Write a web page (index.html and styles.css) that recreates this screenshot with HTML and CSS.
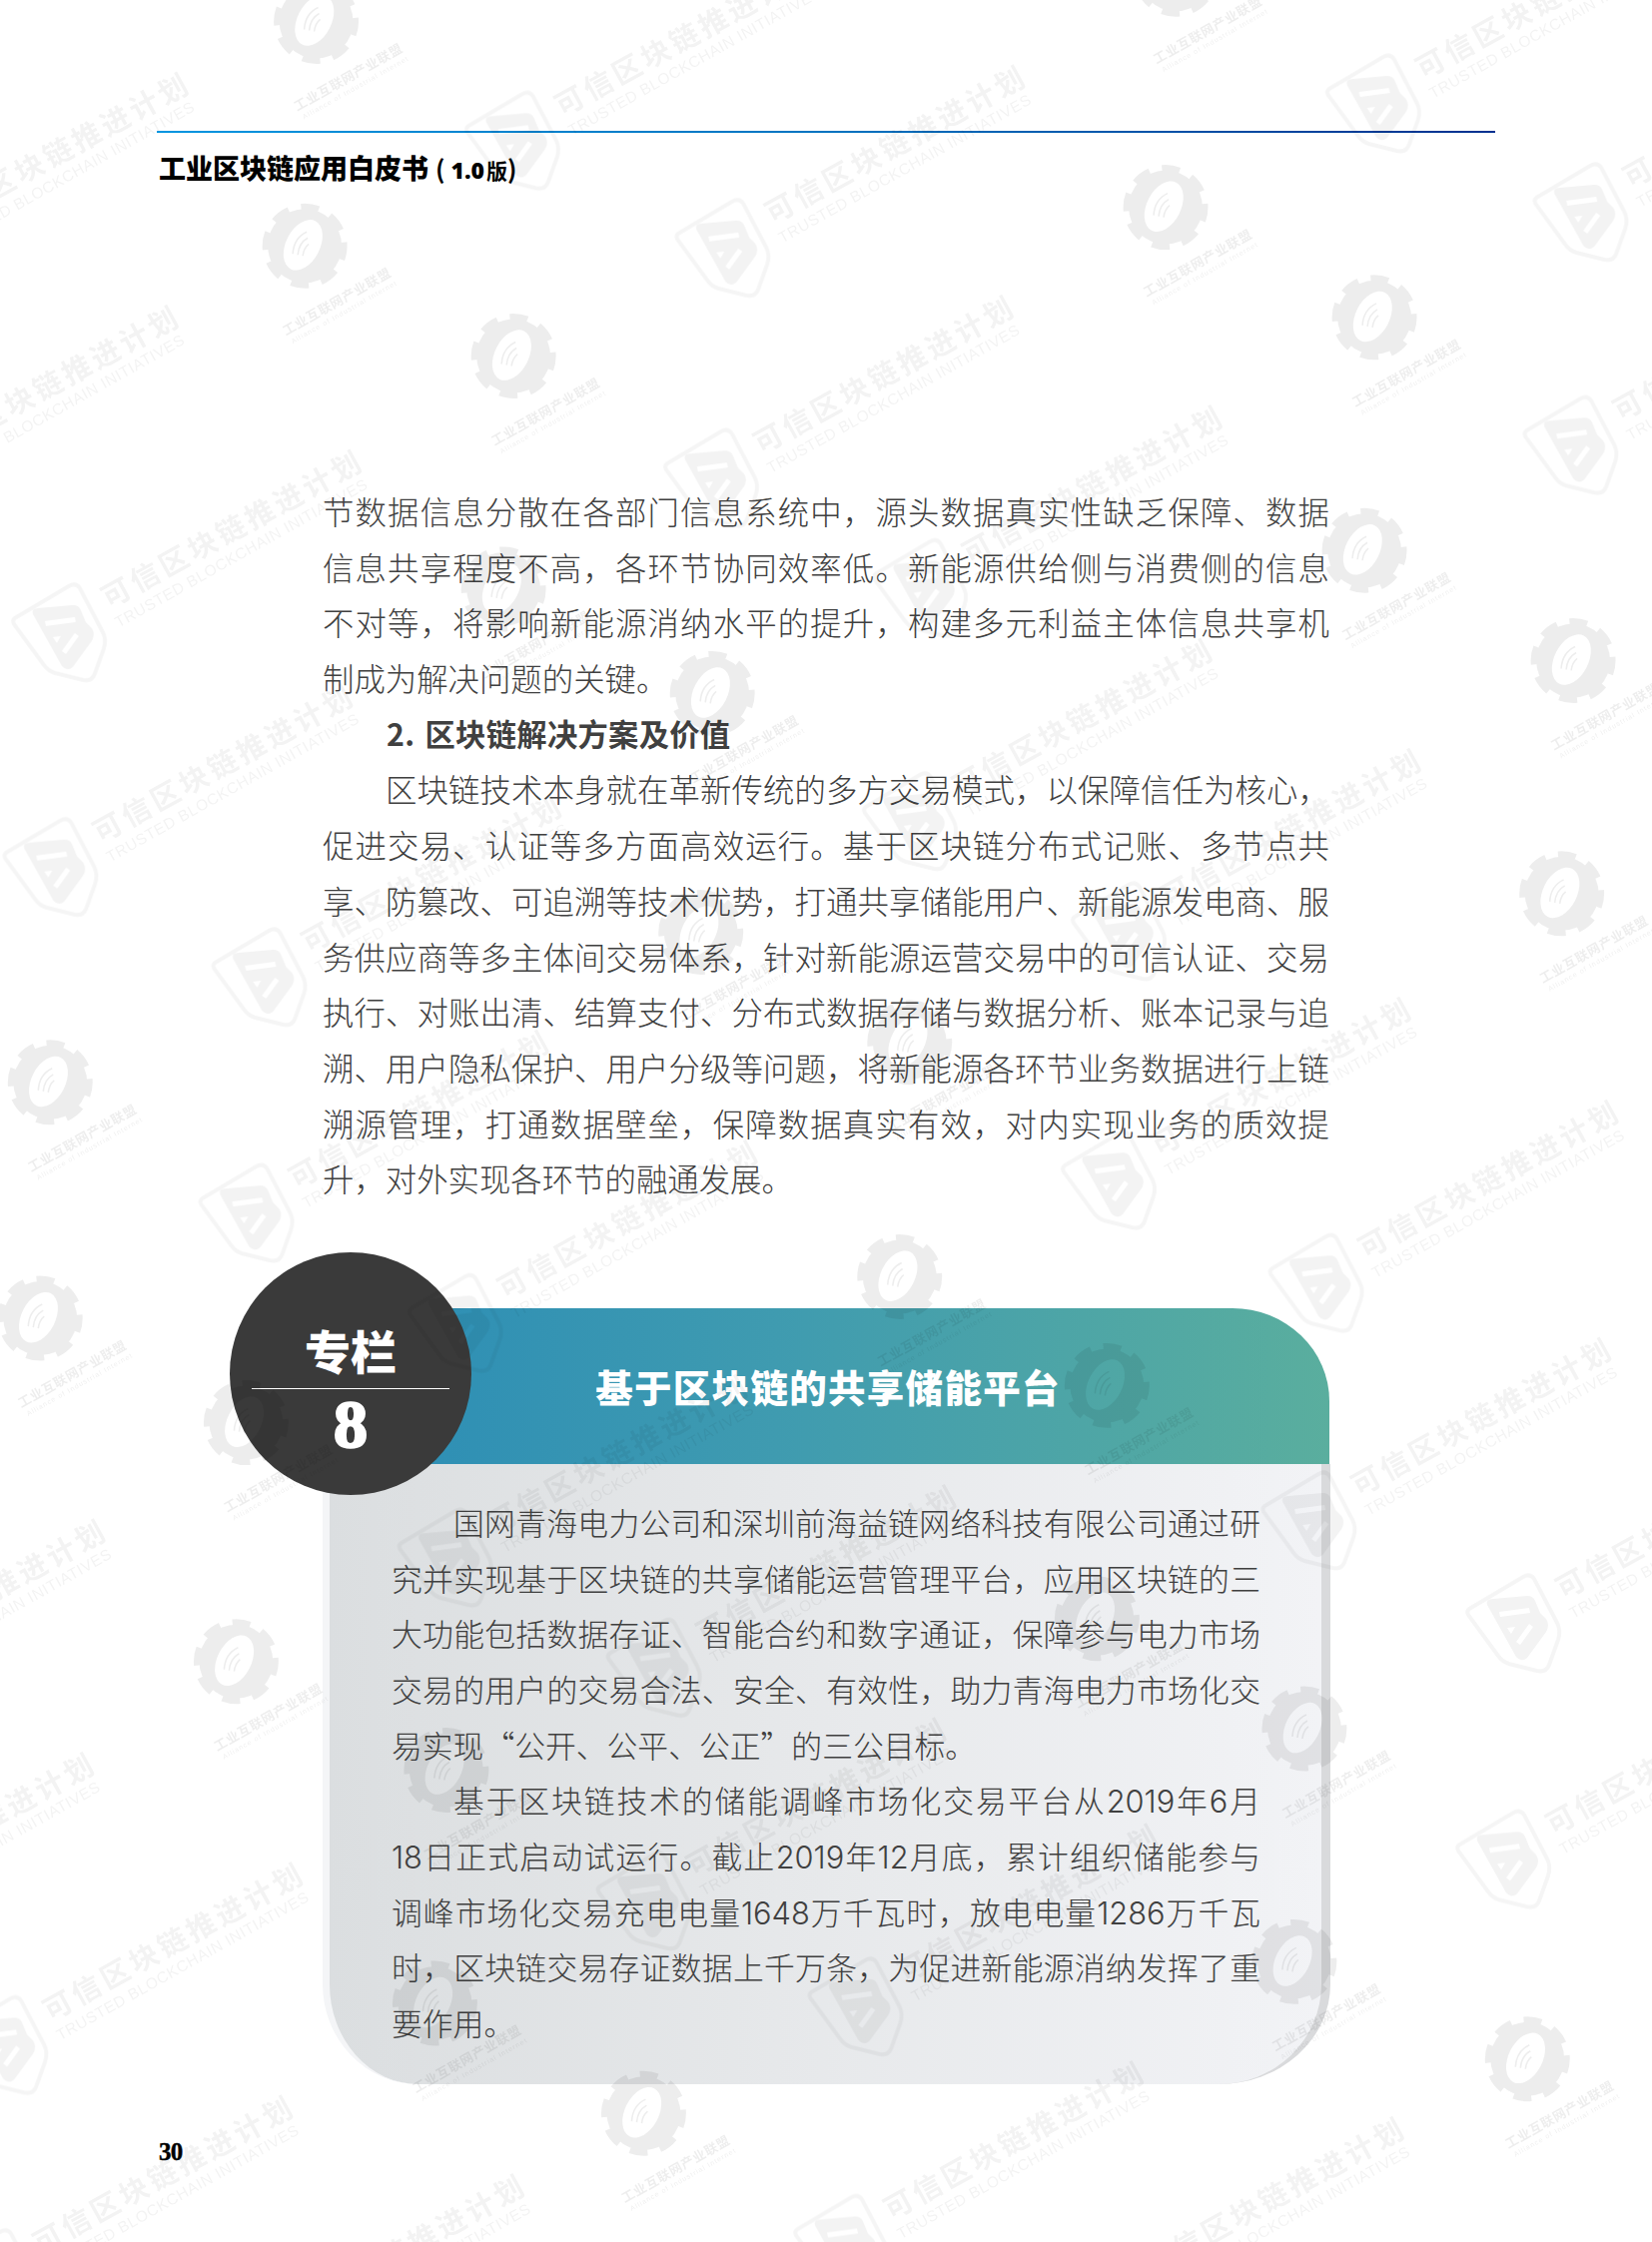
FILE: index.html
```html
<!DOCTYPE html>
<html lang="zh-CN">
<head>
<meta charset="utf-8">
<title>工业区块链应用白皮书（1.0版）</title>
<link rel="stylesheet" href="styles.css">
</head>
<body>
<div class="page">
  <header class="top">
    <div class="rule"></div>
    <h1 class="doc-title">工业区块链应用白皮书<span class="ver"><span class="par">(</span><span class="num">1.0</span>版<span class="par">)</span></span></h1>
  </header>

  <main class="main">
    <section class="article">
      <p class="ln j">节数据信息分散在各部门信息系统中，源头数据真实性缺乏保障、数据</p>
      <p class="ln j">信息共享程度不高，各环节协同效率低。新能源供给侧与消费侧的信息</p>
      <p class="ln j">不对等，将影响新能源消纳水平的提升，构建多元利益主体信息共享机</p>
      <p class="ln">制成为解决问题的关键。</p>
      <h2 class="ln sub">2. 区块链解决方案及价值</h2>
      <p class="ln j in">区块链技术本身就在革新传统的多方交易模式，以保障信任为核心，</p>
      <p class="ln j">促进交易、认证等多方面高效运行。基于区块链分布式记账、多节点共</p>
      <p class="ln j">享、防篡改、可追溯等技术优势，打通共享储能用户、新能源发电商、服</p>
      <p class="ln j">务供应商等多主体间交易体系，针对新能源运营交易中的可信认证、交易</p>
      <p class="ln j">执行、对账出清、结算支付、分布式数据存储与数据分析、账本记录与追</p>
      <p class="ln j">溯、用户隐私保护、用户分级等问题，将新能源各环节业务数据进行上链</p>
      <p class="ln j">溯源管理，打通数据壁垒，保障数据真实有效，对内实现业务的质效提</p>
      <p class="ln">升，对外实现各环节的融通发展。</p>
    </section>

    <section class="box">
      <div class="badge">
        <span class="badge-label">专栏</span>
        <span class="badge-num">8</span>
      </div>
      <div class="box-head">基于区块链的共享储能平台</div>
      <div class="box-body">
        <p class="ln j in2">国网青海电力公司和深圳前海益链网络科技有限公司通过研</p>
        <p class="ln j">究并实现基于区块链的共享储能运营管理平台，应用区块链的三</p>
        <p class="ln j">大功能包括数据存证、智能合约和数字通证，保障参与电力市场</p>
        <p class="ln j">交易的用户的交易合法、安全、有效性，助力青海电力市场化交</p>
        <p class="ln">易实现“公开、公平、公正”的三公目标。</p>
        <p class="ln j in2">基于区块链技术的储能调峰市场化交易平台从<span class="d">2019</span>年<span class="d">6</span>月</p>
        <p class="ln j"><span class="d">18</span>日正式启动试运行。截止<span class="d">2019</span>年<span class="d">12</span>月底，累计组织储能参与</p>
        <p class="ln j">调峰市场化交易充电电量<span class="d">1648</span>万千瓦时，放电电量<span class="d">1286</span>万千瓦</p>
        <p class="ln j">时，区块链交易存证数据上千万条，为促进新能源消纳发挥了重</p>
        <p class="ln">要作用。</p>
      </div>
    </section>
  </main>

  <footer class="folio">30</footer>

  <svg class="wm" viewBox="0 0 1155 1568" aria-hidden="true">
    <defs>
      <mask id="gear-hole" maskUnits="userSpaceOnUse" x="-60" y="-60" width="120" height="120">
        <rect x="-60" y="-60" width="120" height="120" fill="#fff"/>
        <ellipse cx="-2" cy="0" rx="17" ry="27" transform="rotate(27)" fill="#000"/>
      </mask>
      <g id="gm" transform="scale(.6983)">
        <g class="wm-ink">
          <g mask="url(#gear-hole)">
            <circle r="37"/>
            <circle r="38" class="teeth"/>
          </g>
          <path class="arcs" d="M-12,8 Q-11,-8 2,-14 M-7,9 Q-6,-3 3,-8 M-2,10 Q-1,2 4,-2"/>
          <text class="t-gear" transform="translate(-19,90) rotate(-29.5)" textLength="122" lengthAdjust="spacing">工业互联网产业联盟</text>
          <text class="t-gear-en" transform="translate(-12,98) rotate(-29.5)" textLength="120" lengthAdjust="spacing">Alliance of Industrial Internet</text>
        </g>
      </g>
      <g id="sm" transform="scale(.6983)">
        <g class="wm-ink soft">
          <path class="shield" d="M-44,-14 L10,-46 Q17,-50 21,-44 L44,0 Q48,8 45,17 L36,42 Q33,50 24,48 L-4,41 Q-11,39 -15,33 L-45,-8 Q-47,-12 -44,-14 Z"/>
          <path fill-rule="evenodd" d="M-26,-18 Q-28,-24 -20,-24 L14,-27 Q20,-27 22,-22 L27,-10 L33,-4 Q37,2 33,9 L14,35 Q8,40 3,34 Z M-14,-11 L16,-15 L17,-10 L-13,-6 Z M-6,5 L2,4 L-2,11 Z M3,19 L16,1 L20,4 L7,22 Z"/>
          <text class="t-shield" transform="translate(50,-23) rotate(-28.8)" textLength="291" lengthAdjust="spacing">可信区块链推进计划</text>
          <text class="t-shield-en" transform="translate(60,-4) rotate(-29.3)" textLength="287" lengthAdjust="spacing">TRUSTED BLOCKCHAIN INITIATIVES</text>
        </g>
      </g>
    </defs>
    <use href="#sm" x="358" y="98"/><use href="#sm" x="505" y="173"/><use href="#sm" x="497" y="334"/>
    <use href="#sm" x="643" y="411"/><use href="#sm" x="636" y="574"/><use href="#sm" x="782" y="651"/>
    <use href="#sm" x="775" y="825"/><use href="#sm" x="920" y="897"/><use href="#sm" x="915" y="1063"/>
    <use href="#sm" x="1058" y="1135"/><use href="#sm" x="1051" y="1300"/><use href="#sm" x="960" y="72"/>
    <use href="#sm" x="1105" y="148"/><use href="#sm" x="1098" y="311"/><use href="#sm" x="41" y="442"/>
    <use href="#sm" x="35" y="606"/><use href="#sm" x="181" y="683"/><use href="#sm" x="172" y="848"/>
    <use href="#sm" x="318" y="925"/><use href="#sm" x="311" y="1089"/><use href="#sm" x="457" y="1166"/>
    <use href="#sm" x="450" y="1329"/><use href="#sm" x="598" y="1403"/><use href="#sm" x="588" y="1569"/>
    <use href="#sm" x="0" y="1430"/><use href="#sm" x="-7" y="1593"/><use href="#sm" x="-146" y="1353"/>
    <use href="#sm" x="-138" y="1190"/><use href="#sm" x="-80" y="178"/><use href="#sm" x="-87" y="341"/>
    <use href="#sm" x="770" y="1608"/><use href="#sm" x="155" y="1648"/>

    <use href="#gm" x="221" y="15"/><use href="#gm" x="213" y="172"/><use href="#gm" x="359" y="249"/>
    <use href="#gm" x="352" y="412"/><use href="#gm" x="498" y="485"/><use href="#gm" x="490" y="652"/>
    <use href="#gm" x="636" y="729"/><use href="#gm" x="629" y="893"/><use href="#gm" x="774" y="969"/>
    <use href="#gm" x="767" y="1132"/><use href="#gm" x="912" y="1209"/><use href="#gm" x="905" y="1372"/>
    <use href="#gm" x="1068" y="1440"/><use href="#gm" x="815" y="145"/><use href="#gm" x="822" y="-18"/>
    <use href="#gm" x="961" y="222"/><use href="#gm" x="954" y="385"/><use href="#gm" x="1100" y="462"/>
    <use href="#gm" x="1092" y="625"/><use href="#gm" x="35" y="757"/><use href="#gm" x="28" y="922"/>
    <use href="#gm" x="172" y="995"/><use href="#gm" x="165" y="1162"/><use href="#gm" x="312" y="1238"/>
    <use href="#gm" x="304" y="1401"/><use href="#gm" x="450" y="1478"/>
  </svg>
</div>
</body>
</html>
```
FILE: styles.css
```css
* { box-sizing: border-box; }
html, body { margin: 0; padding: 0; background: #fff; }
body { font-family: "Noto Sans CJK SC", "Noto Sans", sans-serif; color: #404040; }

.page { position: relative; width: 1654px; height: 2245px; overflow: hidden; background: #fff; }

.top { padding: 131px 157px 0; }
.rule { height: 2px; background: linear-gradient(90deg, #0095e0 0%, #0073c0 50%, #00308f 100%); }
.doc-title { margin: 18px 0 0; padding-left: 2px; font-size: 27px; line-height: 34px; font-weight: 900; color: #000; }
.ver { margin-left: 7px; font-size: 21px; font-weight: 700; }
.par { font-size: 25px; }
.num { margin: 0 2px 0 6px; font-family: "Open Sans", sans-serif; font-weight: 800; font-size: 23px; }

.main { padding: 297px 0 0 323px; width: 1332px; }

.ln { margin: 0; height: 55.7px; line-height: 55.7px; font-weight: 300; }
.j { text-align: justify; text-align-last: justify; }
.d { font-family: "Inter", sans-serif; font-weight: 300; }

.article { width: 1008px; font-size: 31.4px; }
.in { text-indent: 63px; }
.sub { padding-left: 64px; font-size: 30.3px; font-weight: 700; letter-spacing: .3px; word-spacing: 3px; }

.box { position: relative; width: 1009px; margin-top: 102px; }
.box-head { width: 1008px; height: 156px; padding-left: 4px; display: flex; align-items: center; justify-content: center;
  background: linear-gradient(90deg, #2a8cb6 0%, #3f9bb0 45%, #5aae9e 100%);
  border-top-right-radius: 97px 93px;
  color: #fff; font-size: 37.5px; font-weight: 900; letter-spacing: 1.3px; }
.box-body { height: 621px; padding: 30px 61px 0 62px; font-size: 30.8px;
  background: linear-gradient(90deg, #dbdee0 0%, #e6e8ea 45%, #f2f3f6 100%);
  border-left: 7px solid #f4f5f7; border-right: 9px solid #d9dadc;
  border-radius: 0 0 112px 96px / 0 0 100px 100px; }
.in2 { text-indent: 62px; }

.badge { position: absolute; left: -93px; top: -56px; width: 242px; height: 243px; border-radius: 50%; background: #3a3a3a;
  display: flex; flex-direction: column; align-items: center; color: #fff; }
.badge-label { width: 198px; height: 137px; padding-top: 67px; border-bottom: 1px solid #fff; text-align: center;
  font-size: 46px; line-height: 60px; font-weight: 900; }
.badge-num { margin-top: -1px; font-family: "Liberation Serif", serif; font-weight: 700; font-size: 68px; line-height: 72px; -webkit-text-stroke: 2.4px #fff; }

.folio { position: absolute; left: 159px; top: 2140px; font-family: "Liberation Serif", serif; font-weight: 700; font-size: 25px; line-height: 30px; letter-spacing: -.8px; color: #000; -webkit-text-stroke: .4px #000; }

.wm { position: absolute; left: 0; top: 0; width: 1654px; height: 2245px; pointer-events: none; }
.wm-ink { opacity: .065; fill: #000; }
.wm-ink.soft { opacity: .05; }
.teeth { fill: none; stroke: #000; stroke-width: 9; stroke-dasharray: 17.5 12.35; stroke-dashoffset: 4; }
.arcs { fill: none; stroke: #000; stroke-width: 1.6; }
.shield { fill: none; stroke: #000; stroke-width: 4; opacity: .8; }
.t-gear { font-family: "Noto Sans CJK SC", sans-serif; font-weight: 700; font-size: 13px; }
.t-gear-en { font-family: "Liberation Sans", sans-serif; font-size: 7px; }
.t-shield { font-family: "Noto Sans CJK SC", sans-serif; font-weight: 700; font-size: 29px; }
.t-shield-en { font-family: "Liberation Sans", sans-serif; font-size: 15.5px; }
```
